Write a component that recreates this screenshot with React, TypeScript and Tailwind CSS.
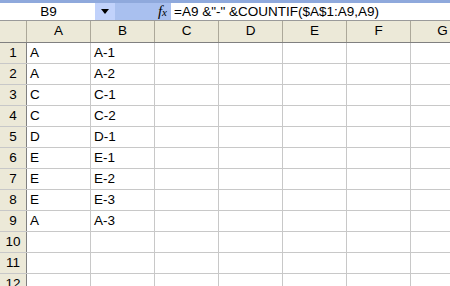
const cols = ["A", "B", "C", "D", "E", "F", "G"];
const data: [string, string][] = [
  ["A", "A-1"],
  ["A", "A-2"],
  ["C", "C-1"],
  ["C", "C-2"],
  ["D", "D-1"],
  ["E", "E-1"],
  ["E", "E-2"],
  ["E", "E-3"],
  ["A", "A-3"],
  ["", ""],
  ["", ""],
  ["", ""],
];

export default function App() {
  return (
    <div className="w-[450px] h-[286px] overflow-hidden bg-white text-[13.5px] text-black font-['Liberation_Sans',Arial,sans-serif]">
      {/* formula bar */}
      <div className="flex h-[21px] bg-[#a9c0ef] border-t-[3px] border-[#8fa9dc] border-b border-b-[#9a9a9a]">
        <div className="w-[95px] bg-white flex items-center justify-center pl-[2px] leading-none">
          B9
        </div>
        <div className="w-[20px] bg-[#c1d2fb] flex items-center justify-center">
          <svg width="8" height="5" viewBox="0 0 8 5">
            <path d="M0 0h8L4 5z" fill="#000" />
          </svg>
        </div>
        <div className="w-[56px] flex items-center justify-end pr-[4px]">
          <span className="font-['Liberation_Serif',serif] italic text-[15px] leading-none">
            f<span className="text-[11px]">x</span>
          </span>
        </div>
        <div className="flex-1 bg-white flex items-center pl-[3px] leading-none whitespace-nowrap">
          =A9 &amp;"-" &amp;COUNTIF($A$1:A9,A9)
        </div>
      </div>
      {/* header row */}
      <div className="flex h-[22px] bg-[#ece9d8] border-b border-[#808080]">
        <div className="w-[27px] shrink-0 border-r border-[#aca899]" />
        {cols.map((c) => (
          <div
            key={c}
            className="w-[64px] shrink-0 border-r border-[#aca899] flex items-center justify-center"
          >
            {c}
          </div>
        ))}
      </div>
      {data.map((r, i) => (
        <div key={i} className="flex h-[21px] border-b border-[#c8c8c8]">
          <div className="w-[27px] shrink-0 bg-[#ece9d8] border-r border-[#808080] flex items-center justify-center">
            {i + 1}
          </div>
          {cols.map((c, j) => (
            <div
              key={c}
              className="w-[64px] shrink-0 border-r border-[#c8c8c8] flex items-center pl-[3px] whitespace-nowrap"
            >
              {j < 2 ? r[j] : ""}
            </div>
          ))}
        </div>
      ))}
    </div>
  );
}
